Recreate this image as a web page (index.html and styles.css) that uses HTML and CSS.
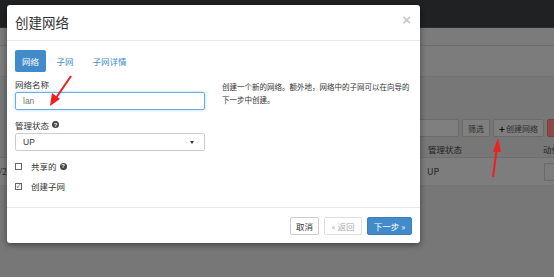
FILE: index.html
```html
<!DOCTYPE html>
<html lang="zh-CN">
<head>
    <meta charset="UTF-8">
    <title>创建网络</title>
    <link rel="stylesheet" href="styles.css">
</head>
<body>
    <div class="page">
        <div class="navbar"></div>
        <div class="subbar"></div>
        <div class="band"></div>
        <div class="toolbar">
            <div class="search"></div>
            <span class="btn-bg">筛选</span>
            <span class="btn-bg"><b>+</b> 创建网络</span>
            <span class="btn-bg danger"></span>
        </div>
        <div class="table-head">
            <span class="col-state">管理状态</span>
            <span class="col-act">动作</span>
        </div>
        <div class="table-row">
            <span class="cut">n/2</span>
            <span class="col-state">UP</span>
            <span class="row-btn"></span>
        </div>
    </div>

    <div class="modal">
        <div class="modal-header">
            <h3>创建网络</h3>
            <span class="close">×</span>
        </div>
        <div class="modal-body">
            <ul class="tabs">
                <li class="active">网络</li>
                <li>子网</li>
                <li>子网详情</li>
            </ul>
            <div class="tab-content">
                <div class="form">
                    <label class="field-label">网络名称</label>
                    <div class="input focus">lan</div>
                    <label class="field-label">管理状态 <i class="help">?</i></label>
                    <div class="input select">UP <span class="caret"></span></div>
                    <div class="check"><span class="box"></span>共享的 <i class="help">?</i></div>
                    <div class="check"><span class="box checked">✓</span>创建子网</div>
                </div>
                <p class="help-text">创建一个新的网络。额外地，网络中的子网可以在向导的下一步中创建。</p>
            </div>
        </div>
        <div class="modal-footer">
            <span class="btn">取消</span>
            <span class="btn disabled">« 返回</span>
            <span class="btn primary">下一步 »</span>
        </div>
    </div>

    <svg class="arrow arrow-input" width="30" height="34" viewBox="0 0 30 34">
        <path d="M24 2 L9 24" stroke="#f01e1e" stroke-width="2" fill="none"/>
        <path d="M3 32 L5 19 L13 25 Z" fill="#f01e1e"/>
    </svg>
    <svg class="arrow arrow-create" width="16" height="42" viewBox="0 0 16 42">
        <path d="M4 40 L8 10" stroke="#f01e1e" stroke-width="2" fill="none"/>
        <path d="M9 1 L4 15 L12 15 Z" fill="#f01e1e"/>
    </svg>
</body>
</html>
```

FILE: styles.css
```css
body {
    margin: 0;
    width: 554px;
    height: 277px;
    overflow: hidden;
    position: relative;
    font-family: "Noto Sans CJK SC", "Liberation Sans", sans-serif;
    font-size: 9px;
    color: #333;
    background: #777;
}
.page {
    display: flex;
    flex-direction: column;
}
.navbar {
    height: 27px;
    background: #1f2123;
    border-bottom: 1px solid #2a2c2e;
}
.subbar {
    height: 17px;
    background: #7b7b7b;
    border-bottom: 1px solid #6e6e6e;
}
.band {
    height: 30px;
    background: #7c7c7c;
    border-bottom: 1px solid #727272;
}
.toolbar {
    display: flex;
    justify-content: flex-end;
    gap: 3px;
    margin-top: 42px;
    height: 18px;
    margin-right: -9px;
}
.search {
    width: 40px;
    border: 1px solid #6a6a6a;
    border-radius: 2px;
    background: #7f7f7f;
}
.btn-bg {
    display: flex;
    align-items: center;
    padding: 0 5px;
    border: 1px solid #6a6a6a;
    border-radius: 2px;
    background: #7f7f7f;
    color: #2c2c2c;
    font-size: 8px;
}
.btn-bg b {
    margin-right: 1px;
    font-size: 10px;
    color: #111;
}
.btn-bg.danger {
    width: 14px;
    padding: 0;
    background: #8a4a48;
    border-color: #7a3e3c;
}
.table-head {
    display: flex;
    align-items: center;
    height: 17px;
    margin-top: 3px;
    border-bottom: 1px solid #6e6e6e;
    color: #222;
    font-size: 8.5px;
}
.col-state {
    margin-left: auto;
    width: 115px;
}
.col-act {
    width: 11px;
    overflow: hidden;
    white-space: nowrap;
}
.table-row {
    display: flex;
    align-items: center;
    height: 27px;
    background: #7d7d7d;
    border-bottom: 1px solid #737373;
    color: #262626;
    font-size: 9px;
}
.cut {
    width: 7px;
    overflow: hidden;
    white-space: nowrap;
    direction: rtl;
    color: #333;
}
.table-row .col-state {
    width: 117px;
}
.row-btn {
    width: 9px;
    height: 16px;
    border: 1px solid #6a6a6a;
    border-right: 0;
    border-radius: 2px 0 0 2px;
}

.modal {
    position: absolute;
    left: 7px;
    top: 5px;
    width: 413px;
    height: 238px;
    background: #fff;
    border-radius: 3px;
    box-shadow: 0 2px 6px rgba(0, 0, 0, 0.45);
    display: flex;
    flex-direction: column;
}
.modal-header {
    display: flex;
    align-items: center;
    justify-content: space-between;
    height: 35px;
    padding: 0 9px 0 8px;
    border-bottom: 1px solid #e8e8e8;
}
.modal-header h3 {
    margin: 0;
    font-size: 13.5px;
    font-weight: normal;
    color: #333;
    margin-top: -1px;
}
.close {
    font-family: "Liberation Sans", sans-serif;
    font-size: 15px;
    font-weight: bold;
    color: #c8c8c8;
    margin-top: -6px;
}
.modal-body {
    flex: 1;
    padding: 9px 8px 0 8px;
}
.tabs {
    display: flex;
    list-style: none;
    margin: 0;
    padding: 0;
}
.tabs li {
    height: 22px;
    line-height: 22px;
    padding: 0 9.5px;
    border-radius: 2px;
    color: #428bca;
    font-size: 8.5px;
}
.tabs li.active {
    padding: 0 7px;
    background: #428bca;
    color: #fff;
    margin-right: 1px;
}
.tab-content {
    display: flex;
    gap: 17px;
    margin-top: 6px;
}
.form {
    width: 190px;
    flex-shrink: 0;
    display: flex;
    flex-direction: column;
}
.field-label {
    display: flex;
    align-items: center;
    gap: 3px;
    height: 11px;
    margin-bottom: 3px;
    font-size: 8.5px;
    color: #333;
}
.help {
    display: inline-flex;
    align-items: center;
    justify-content: center;
    width: 7px;
    height: 7px;
    border-radius: 50%;
    background: #444;
    color: #fff;
    font-style: normal;
    font-weight: bold;
    font-size: 6px;
    font-family: "Liberation Sans", sans-serif;
}
.input {
    box-sizing: border-box;
    display: flex;
    align-items: center;
    height: 18px;
    padding: 0 7px;
    border: 1px solid #ccc;
    border-radius: 2px;
    margin-bottom: 9px;
    font-family: "Liberation Sans", sans-serif;
    font-size: 8.5px;
    color: #555;
}
.input.focus {
    border-color: #66afe9;
    box-shadow: 0 0 3px rgba(102, 175, 233, 0.6);
    color: #777;
}
.select {
    justify-content: space-between;
    color: #333;
    margin-bottom: 9px;
}
.caret {
    width: 0;
    height: 0;
    border-left: 2.5px solid transparent;
    border-right: 2.5px solid transparent;
    border-top: 3px solid #333;
    margin-right: 3px;
}
.check {
    display: flex;
    align-items: center;
    gap: 3px;
    height: 12px;
    margin-bottom: 8px;
    font-size: 8.5px;
    color: #333;
}
.box {
    box-sizing: border-box;
    width: 7px;
    height: 7px;
    border: 1px solid #666;
    margin-right: 6px;
    display: flex;
    align-items: center;
    justify-content: center;
    font-size: 6px;
    line-height: 1;
    color: #333;
}
.help-text {
    margin: 2px 0 0;
    width: 192px;
    font-size: 7.5px;
    line-height: 13px;
    color: #333;
}
.modal-footer {
    display: flex;
    justify-content: flex-end;
    align-items: center;
    gap: 5px;
    height: 35px;
    padding: 0 8px 0 0;
    border-top: 1px solid #e8e8e8;
}
.btn {
    display: flex;
    align-items: center;
    justify-content: center;
    box-sizing: border-box;
    height: 18px;
    padding: 0 5px;
    border: 1px solid #ccc;
    border-radius: 2px;
    font-size: 8.5px;
    color: #333;
    background: #fff;
}
.btn.disabled {
    width: 38px;
    color: #aaa;
    border-color: #ddd;
}
.btn.primary {
    width: 45px;
    background: #428bca;
    border-color: #3a7fbb;
    color: #fff;
}
.arrow {
    position: absolute;
}
.arrow-input {
    left: 47px;
    top: 74px;
}
.arrow-create {
    left: 489px;
    top: 137px;
}
```
